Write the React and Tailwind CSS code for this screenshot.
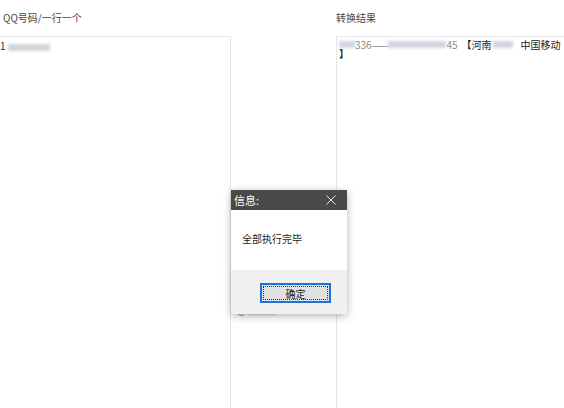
import React from 'react';

const Blur = ({ w }) => (
    <span className={`inline-block h-[7px] bg-gray-300 blur-[1.5px] align-middle ${w}`} />
);

export default function App() {
    return (
        <div
            className="relative flex h-[408px] w-[564px] overflow-hidden bg-white text-[#333]"
            style={{ fontFamily: '"Noto Sans CJK SC", "Liberation Sans", sans-serif' }}
        >
            {/* Left: input */}
            <div className="flex w-[231px] flex-col">
                <div className="h-[36px] pl-[3px] pt-[11px] text-[10px] leading-[14px] text-[#444]">QQ号码/一行一个</div>
                <div className="flex-1 border-t border-r border-[#e6e6e6] pt-[3px] text-[10px] leading-[11px]">
                    <span>1</span>
                    <Blur w="w-[42px] ml-[2px]" />
                </div>
            </div>

            {/* Middle */}
            <div className="w-[105px]" />

            {/* Right: result */}
            <div className="flex flex-1 flex-col">
                <div className="h-[36px] pt-[11px] text-[10px] leading-[14px] text-[#444]">转换结果</div>
                <div className="flex-1 border-t border-l border-[#e6e6e6] pl-[2px] pt-[3px] text-[10px] leading-[9px] text-[#222]">
                    <div className="flex items-center whitespace-nowrap">
                        <Blur w="w-[16px]" />
                        <span className="text-[#888]">336——</span>
                        <Blur w="w-[58px]" />
                        <span className="text-[#888]">45</span>
                        <span className="ml-[4px]">【河南</span>
                        <Blur w="w-[20px] ml-[1px]" />
                        <span className="ml-[8px]">中国移动</span>
                    </div>
                    <div className="font-bold">】</div>
                </div>
            </div>

            {/* Partially hidden item under dialog */}
            <div className="absolute left-[238px] top-[309px] flex items-center gap-[4px]">
                <span className="h-[7px] w-[7px] rounded-full border border-[#888]" />
                <span className="h-[4px] w-[28px] bg-gray-300 blur-[1px]" />
            </div>

            {/* Dialog */}
            <div className="absolute left-[231px] top-[190px] flex w-[116px] flex-col shadow-[0_2px_8px_rgba(0,0,0,0.3)]">
                <div className="flex h-[20px] items-center justify-between bg-[#4a4a48] pl-[3px] pr-[11px] text-white">
                    <span className="text-[11px] leading-none">信息:</span>
                    <svg width="10" height="10" viewBox="0 0 10 10" stroke="#e8e8e8" strokeWidth="1">
                        <path d="M0.5 0.5 L9.5 9.5 M9.5 0.5 L0.5 9.5" />
                    </svg>
                </div>
                <div className="flex h-[60px] items-center bg-white pl-[11px] pb-[3px] text-[10px] text-[#222]">全部执行完毕</div>
                <div className="flex h-[44px] items-start justify-center bg-[#f0f0f0] pt-[13px] pl-[13px]">
                    <div className="flex h-[20px] w-[71px] items-center justify-center border-2 border-[#1a73d9] bg-[#e1e1e1] text-[10px] text-[#222] outline-1 outline-dotted outline-offset-[-4px] outline-[#333]">
                        确定
                    </div>
                </div>
            </div>
        </div>
    );
}
